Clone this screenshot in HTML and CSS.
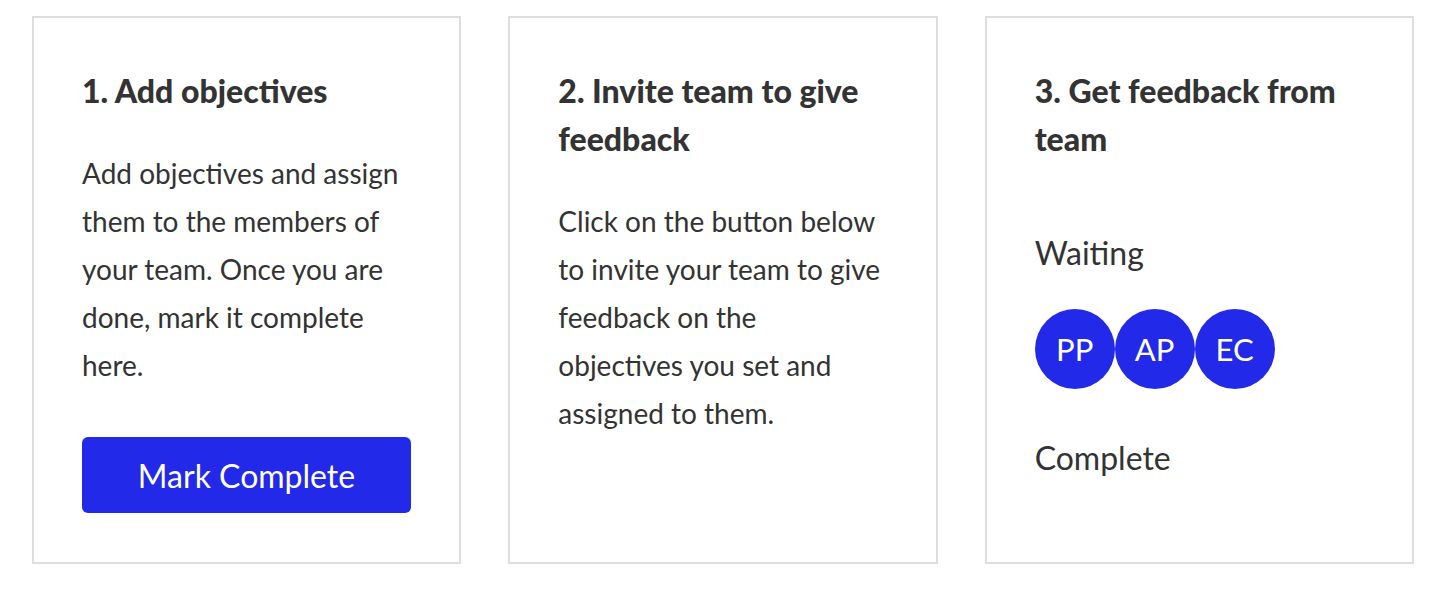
FILE: index.html
```html
<!DOCTYPE html>
<html lang="en">
<head>
<meta charset="utf-8">
<title>Steps</title>
<link rel="stylesheet" href="styles.css">
</head>
<body>
<div class="steps">
  <section class="card">
    <h2 class="card-title">1. Add objectives</h2>
    <p class="card-text">Add objectives and assign them to the members of your team. Once you are done, mark it complete here.</p>
    <button class="btn" type="button">Mark Complete</button>
  </section>
  <section class="card">
    <h2 class="card-title">2. Invite team to give feedback</h2>
    <p class="card-text">Click on the button below to invite your team to give feedback on the objectives you set and assigned to them.</p>
  </section>
  <section class="card">
    <h2 class="card-title">3. Get feedback from team</h2>
    <div class="status status-waiting">Waiting</div>
    <div class="avatars">
      <span class="avatar">PP</span>
      <span class="avatar">AP</span>
      <span class="avatar">EC</span>
    </div>
    <div class="status status-complete">Complete</div>
  </section>
</div>
</body>
</html>
```

FILE: styles.css
```css
* { box-sizing: border-box; }
body {
  margin: 0;
  background: #fff;
  font-family: Lato, "Open Sans", sans-serif;
  color: #333;
}
.steps {
  display: grid;
  grid-template-columns: repeat(3, 1fr);
  column-gap: 47px;
  padding: 16px 28px 26px 32px;
}
.card {
  border: 2px solid #dedede;
  height: 548px;
  padding: 49px 48px 48px;
  display: flex;
  flex-direction: column;
  align-items: flex-start;
}
.card-title {
  margin: 0 0 34px;
  font-size: 32px;
  font-weight: 900;
  line-height: 48px;
  color: #333;
}
.card-text {
  margin: 0 0 48px;
  font-size: 28px;
  line-height: 48px;
}
.btn {
  width: 329px;
  height: 76px;
  border: 0;
  border-radius: 6px;
  background: #2329e8;
  color: #fff;
  font-family: inherit;
  font-size: 32px;
  cursor: pointer;
}
.status {
  font-size: 32px;
  line-height: 48px;
}
.status-waiting { margin-top: 32px; }
.avatars {
  display: flex;
  margin: 32px 0 45px;
}
.avatar {
  width: 80px;
  height: 80px;
  border-radius: 50%;
  background: #2329e8;
  color: #fff;
  font-size: 31px;
  display: flex;
  align-items: center;
  justify-content: center;
}
```
